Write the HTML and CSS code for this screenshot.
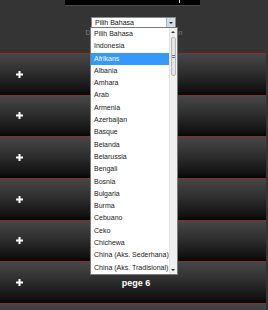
FILE: index.html
```html
<!DOCTYPE html>
<html lang="id">
<head>
    <meta charset="UTF-8">
    <meta name="viewport" content="width=device-width, initial-scale=1.0">
    <title>Pilih Bahasa</title>
    <link rel="stylesheet" href="styles.css">
</head>
<body>

    <!-- Header / translate gadget -->
    <div class="top">
        <div class="topbar"><span class="speck"></span></div>
        <div class="picker">
            <div class="select">
                <span>Pilih Bahasa</span>
                <span class="arrow-btn"><i></i></span>
            </div>
            <div class="popup">
                <ul class="options">
                    <li>Pilih Bahasa</li>
                    <li>Indonesia</li>
                    <li class="active">Afrikans</li>
                    <li>Albania</li>
                    <li>Amhara</li>
                    <li>Arab</li>
                    <li>Armenia</li>
                    <li>Azerbaijan</li>
                    <li>Basque</li>
                    <li>Belanda</li>
                    <li>Belarussia</li>
                    <li>Bengali</li>
                    <li>Bosnia</li>
                    <li>Bulgaria</li>
                    <li>Burma</li>
                    <li>Cebuano</li>
                    <li>Ceko</li>
                    <li>Chichewa</li>
                    <li>China (Aks. Sederhana)</li>
                    <li>China (Aks. Tradisional)</li>
                </ul>
                <div class="scrollbar">
                    <span class="sb-btn up"><i></i></span>
                    <div class="track"><span class="thumb"><i></i></span></div>
                    <span class="sb-btn down"><i></i></span>
                </div>
            </div>
        </div>
        <p class="powered">Diberdayakan oleh Terjemahan</p>
    </div>

    <!-- Page list -->
    <div class="pages">
        <div class="page"><span class="plus"><svg width="7" height="7" viewBox="0 0 7 7"><path d="M2.5 0h2v2.5h2.5v2h-2.5v2.5h-2v-2.5h-2.5v-2h2.5z" fill="#fff"/></svg></span><span class="label">pege 1</span></div>
        <div class="page"><span class="plus"><svg width="7" height="7" viewBox="0 0 7 7"><path d="M2.5 0h2v2.5h2.5v2h-2.5v2.5h-2v-2.5h-2.5v-2h2.5z" fill="#fff"/></svg></span><span class="label">pege 2</span></div>
        <div class="page"><span class="plus"><svg width="7" height="7" viewBox="0 0 7 7"><path d="M2.5 0h2v2.5h2.5v2h-2.5v2.5h-2v-2.5h-2.5v-2h2.5z" fill="#fff"/></svg></span><span class="label">pege 3</span></div>
        <div class="page"><span class="plus"><svg width="7" height="7" viewBox="0 0 7 7"><path d="M2.5 0h2v2.5h2.5v2h-2.5v2.5h-2v-2.5h-2.5v-2h2.5z" fill="#fff"/></svg></span><span class="label">pege 4</span></div>
        <div class="page"><span class="plus"><svg width="7" height="7" viewBox="0 0 7 7"><path d="M2.5 0h2v2.5h2.5v2h-2.5v2.5h-2v-2.5h-2.5v-2h2.5z" fill="#fff"/></svg></span><span class="label">pege 5</span></div>
        <div class="page"><span class="plus"><svg width="7" height="7" viewBox="0 0 7 7"><path d="M2.5 0h2v2.5h2.5v2h-2.5v2.5h-2v-2.5h-2.5v-2h2.5z" fill="#fff"/></svg></span><span class="label">pege 6</span></div>
        <div class="page"></div>
    </div>

</body>
</html>
```

FILE: styles.css
```css
html, body {
    margin: 0;
    height: 310px;
    overflow: hidden;
}

body {
    background: #343434;
    font-family: 'Liberation Sans', Arial, sans-serif;
}

/* Header */
.top {
    height: 53px;
}

.topbar {
    margin-left: 65px;
    width: 135px;
    height: 5px;
    background: #000;
    border-bottom: 1px solid #4a4a4a;
    display: flex;
    justify-content: flex-end;
}

.speck {
    width: 1px;
    height: 3px;
    margin-right: 20px;
    background: #ddd;
}

/* Translate select */
.picker {
    position: relative;
    margin: 11px 0 0 91px;
    width: 85px;
}

.select {
    box-sizing: border-box;
    height: 11px;
    background: #fff;
    border: 1px solid #8a8a8a;
    display: flex;
    align-items: center;
    justify-content: space-between;
    font-size: 7px;
    color: #111;
    padding-left: 3px;
}

.arrow-btn {
    width: 8px;
    height: 9px;
    background: #d4dce8;
    border-left: 1px solid #a9b4c4;
    display: flex;
    align-items: center;
    justify-content: center;
}

.arrow-btn i,
.sb-btn i {
    width: 0;
    height: 0;
    border-left: 2px solid transparent;
    border-right: 2px solid transparent;
    border-top: 2px solid #222;
}

.sb-btn.up i {
    border-top: none;
    border-bottom: 2px solid #333;
}

/* Dropdown popup */
.popup {
    position: absolute;
    top: 10px;
    left: -1px;
    width: 88px;
    box-sizing: border-box;
    border: 1px solid #7a7a7a;
    background: #fff;
    display: flex;
    z-index: 5;
}

.options {
    list-style: none;
    margin: 0;
    padding: 0;
    flex: 1;
}

.options li {
    height: 12.3px;
    line-height: 12.3px;
    padding-left: 3px;
    font-size: 7px;
    color: #222;
    white-space: nowrap;
}

.options li.active {
    background: #3399ff;
    color: #fff;
}

.scrollbar {
    width: 8px;
    display: flex;
    flex-direction: column;
    background: #f0f0f0;
    border-left: 1px solid #e4e4e4;
}

.sb-btn {
    height: 8px;
    display: flex;
    align-items: center;
    justify-content: center;
}

.track {
    flex: 1;
    padding-top: 1px;
}

.thumb {
    display: flex;
    align-items: center;
    justify-content: center;
    box-sizing: border-box;
    height: 39px;
    margin: 0 1px;
    background: #e6e6e6;
    border: 1px solid #b8b8b8;
    border-radius: 2px;
}

.thumb i {
    width: 3px;
    height: 3px;
    border-top: 1px solid #777;
    border-bottom: 1px solid #777;
    box-sizing: border-box;
}

.powered {
    margin: 1px 0 0;
    line-height: 8px;
    font-size: 7px;
    color: #7c7c7c;
    text-align: center;
}

/* Pages */
.pages {
    margin-right: 2px;
}

.page {
    height: 40.667px;
    border-top: 1px solid #8a2d2d;
    background: linear-gradient(to bottom, #474747 0%, #2e2e2e 45%, #121212 88%, #050505 100%);
    display: grid;
    grid-template-columns: 36px 1fr 30px;
    align-items: center;
}

.plus {
    padding-left: 16px;
    display: flex;
}

.label {
    text-align: center;
    color: #fff;
    font-weight: bold;
    font-size: 9px;
}
```
